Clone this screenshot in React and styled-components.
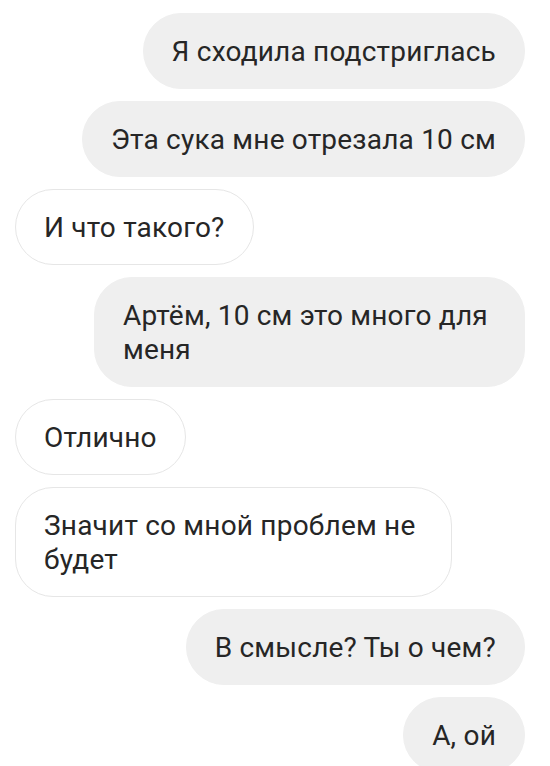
import React from "react"
import styled, { createGlobalStyle, css } from "styled-components"

const GlobalStyle = createGlobalStyle`
  html, body {
    margin: 0;
    padding: 0;
    background: #ffffff;
  }
  body {
    font-family: Roboto, "Noto Sans", "Liberation Sans", sans-serif;
    overflow: hidden;
  }
`

const Thread = styled.div`
  display: flex;
  flex-direction: column;
  gap: 12px;
  padding: 13px 25px 0 15px;
  height: 766px;
  box-sizing: border-box;
`

const Row = styled.div`
  display: flex;
  justify-content: ${props => (props.$mine ? `flex-end` : `flex-start`)};
`

const Bubble = styled.div`
  box-sizing: border-box;
  max-width: ${props => props.$max || 446}px;
  padding: 21px 28px 19px;
  border-radius: 38px;
  font-size: 28px;
  line-height: 34px;
  color: #262626;
  letter-spacing: 0.2px;
  ${props =>
    props.$mine
      ? css`
          background: #efefef;
          border: 1px solid #efefef;
        `
      : css`
          background: #ffffff;
          border: 1px solid #e6e6e6;
        `}
`

const messages = [
  { mine: true, text: `Я сходила подстриглась` },
  { mine: true, text: `Эта сука мне отрезала 10 см` },
  { mine: false, text: `И что такого?` },
  { mine: true, text: `Артём, 10 см это много для меня`, max: 431 },
  { mine: false, text: `Отлично` },
  { mine: false, text: `Значит со мной проблем не будет`, max: 437 },
  { mine: true, text: `В смысле? Ты о чем?` },
  { mine: true, text: `А, ой` },
]

export default function App() {
  return (
    <>
      <GlobalStyle />
      <Thread>
        {messages.map((m, i) => (
          <Row key={i} $mine={m.mine}>
            <Bubble $mine={m.mine} $max={m.max}>{m.text}</Bubble>
          </Row>
        ))}
      </Thread>
    </>
  )
}
